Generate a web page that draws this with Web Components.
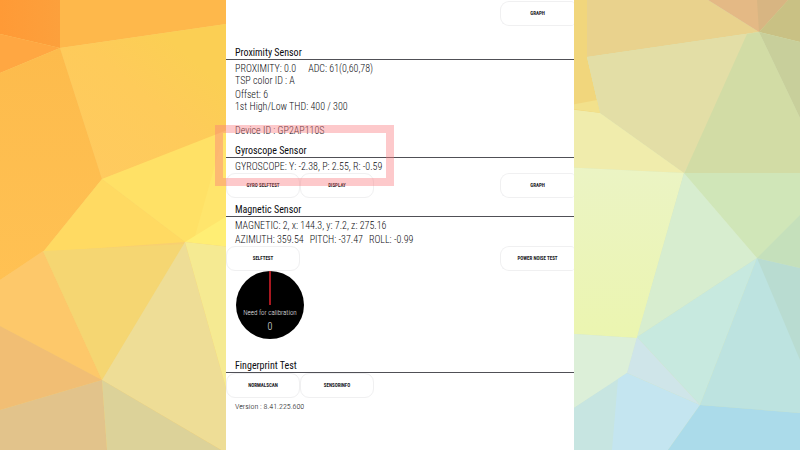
<!DOCTYPE html>
<html lang="en">
<head>
<meta charset="utf-8">
<meta name="viewport" content="width=device-width, initial-scale=1">
<title>Sensor test</title>
<style>
  body {
    margin: 0;
    background: #fcc95a;
    color: #0c0c10;
    font-family: "Roboto Condensed", Roboto, "Liberation Sans", sans-serif;
  }
</style>
</head>
<body>
<sensor-app></sensor-app>

<script>
'use strict';

/**
 * Attach an open shadow root with the given markup
 * @param {HTMLElement} host
 * @param {string} html
 * @return {ShadowRoot}
 */
const shadow = (host, html) => {
  const root = host.attachShadow({mode: 'open'});
  root.innerHTML = html;
  return root;
};

/**
 * Low poly wallpaper, stretched over the whole window
 */
class PolyBackdrop extends HTMLElement {
  constructor() {
    super();
    shadow(this, `
    <style>
      :host {
        display: block;
      }
      svg {
        display: block;
        width: 100%;
        height: 100%;
      }
    </style>
    <svg viewBox="0 0 800 450" preserveAspectRatio="none" aria-hidden="true">
      <defs>
        <linearGradient id="a" x1="0" y1="1" x2="1" y2="0">
          <stop offset="0" stop-color="#ffca60"/><stop offset=".5" stop-color="#fecb5a"/><stop offset=".75" stop-color="#fbcf54"/>
        </linearGradient>
        <linearGradient id="b" x1="0" y1="0" x2="1" y2="0">
          <stop offset="0" stop-color="#ff9a36"/><stop offset="1" stop-color="#fca03c"/>
        </linearGradient>
        <linearGradient id="c" x1="0" y1="0" x2="0" y2="1">
          <stop offset="0" stop-color="#fdbb4c"/><stop offset="1" stop-color="#ffc153"/>
        </linearGradient>
        <linearGradient id="d" x1="0" y1="0" x2="0" y2="1">
          <stop offset="0" stop-color="#ebf4c4"/><stop offset="1" stop-color="#ebf5b0"/>
        </linearGradient>
      </defs>
      <rect width="400" height="450" fill="#f8d070"/>
      <rect x="400" width="400" height="450" fill="#d8e6b8"/>
      <path fill="url(#b)" d="M0 0H60V48L0 34z"/>
      <path fill="#ffa742" d="M0 34L60 48L0 73z"/>
      <path fill="#feb84b" d="M60 0H240V22L60 48z"/>
      <path fill="url(#a)" d="M60 48L240 22V127L102 179z"/>
      <path fill="url(#c)" d="M0 73L60 48L102 179L43 252L0 280z"/>
      <path fill="#ffda62" d="M102 179L185 242L43 252z"/>
      <path fill="#ffe166" d="M102 179L240 125V230L185 242z"/>
      <path fill="#ffe56c" d="M222 140H240V215L195 236z"/>
      <path fill="#ffee74" d="M240 208V248L185 242z"/>
      <path fill="#fdc86a" d="M0 280L43 251L102 380L0 326z"/>
      <path fill="#f5d672" d="M43 251L185 244L102 380z"/>
      <path fill="#eedd96" d="M185 242L240 438V461L102 380z"/>
      <path fill="#f5ea92" d="M185 242L240 248V438z"/>
      <path fill="#f1be74" d="M0 326L102 380L0 410z"/>
      <path fill="#e2c38b" d="M0 410L102 380L107 450H0z"/>
      <path fill="#dcd299" d="M102 380L221 450H107z"/>

      <path fill="#f1d67c" d="M560 0H587V57L600 113L560 109z"/>
      <path fill="#e9d28d" d="M587 0H708L759 32L587 57z"/>
      <path fill="#e4b985" d="M708 0H788L759 32z"/>
      <path fill="#d8b582" d="M757 0H788L759 32z"/>
      <path fill="#c9c184" d="M788 0H800V42L759 32z"/>
      <path fill="#e3dea6" d="M587 57L759 32L684 173L600 113z"/>
      <path fill="#d2dca5" d="M747 34L759 32L800 118V174H684z"/>
      <path fill="#c8cf9b" d="M759 32L800 42V118z"/>
      <path fill="#f0ecac" d="M560 108L600 113L684 173L560 167z"/>
      <path fill="#f2e18c" d="M560 107L597 100L600 113z"/>
      <path fill="url(#d)" d="M560 167L684 173L637 338L560 333z"/>
      <path fill="#d0e6b8" d="M684 173H800V222L757 258z"/>
      <path fill="#c5e0bb" d="M800 215V268L757 258z"/>
      <path fill="#d7edcf" d="M684 173L757 258L637 337z"/>
      <path fill="#c7e9df" d="M757 258L700 405L637 337z"/>
      <path fill="#bde3e0" d="M757 258L800 330V413L700 405z"/>
      <path fill="#b9dcd1" d="M757 258L800 268V360z"/>
      <path fill="#dcefd8" d="M560 333L637 338L627 374L560 417z"/>
      <path fill="#cfe5e9" d="M637 337L700 405L627 373z"/>
      <path fill="#c7e5e1" d="M560 417L627 373V450H560z"/>
      <path fill="#c4e5f0" d="M618 379L627 373L700 405L668 450H612z"/>
      <path fill="#abdbea" d="M700 405L800 413V450H668z"/>
    </svg>`);
  }
}
customElements.define('poly-backdrop', PolyBackdrop);

/**
 * Heading with a rule under it, and the readings of one sensor
 */
class SensorSection extends HTMLElement {
  constructor() {
    super();
    shadow(this, `
    <style>
      :host {
        display: block;
        position: relative;
      }
      h2 {
        margin: 0;
        padding-left: 9px;
        border-bottom: 1px solid #505056;
        font-size: 10px;
        font-weight: 400;
        line-height: 13px;
      }
      ::slotted(sensor-reading:first-child) {
        margin-top: 3px;
      }
    </style>
    <h2></h2>
    <slot></slot>`);
  }
  connectedCallback() {
    this.shadowRoot.querySelector('h2').textContent = this.getAttribute('heading');
  }
}
customElements.define('sensor-section', SensorSection);

/**
 * One line of values, each value in its own span
 */
class SensorReading extends HTMLElement {
  constructor() {
    super();
    shadow(this, `
    <style>
      :host {
        display: flex;
        gap: 6px;
        padding-left: 9px;
        font-size: 10px;
        font-weight: 300;
        line-height: 12px;
        white-space: pre;
      }
      :host([wide]) {
        gap: 12px;
      }
      :host([small]) {
        margin-top: 3px;
        font-size: 8px;
      }
    </style>
    <slot></slot>`);
  }
}
customElements.define('sensor-reading', SensorReading);

/**
 * Row of buttons in four columns; the end attribute puts one in the last
 */
class ButtonRow extends HTMLElement {
  constructor() {
    super();
    shadow(this, `
    <style>
      :host {
        display: grid;
        grid-template-columns: 74fr 74fr 126fr 74fr;
      }
      ::slotted([end]) {
        grid-column: 4;
      }
    </style>
    <slot></slot>`);
  }
}
customElements.define('button-row', ButtonRow);

class TestButton extends HTMLElement {
  constructor() {
    super();
    shadow(this, `
    <style>
      :host {
        display: block;
      }
      button {
        display: block;
        width: 100%;
        height: 25px;
        padding: 0 0 2px;
        border: 1px solid #f0f0f1;
        border-radius: 9px;
        background: #fff;
        color: #202024;
        font: bold 5px/12px "Roboto Condensed", Roboto, sans-serif;
        cursor: pointer;
      }
      :host([end]) button {
        border-right: 0;
        border-radius: 9px 3px 3px 9px;
      }
    </style>
    <button type="button"><slot></slot></button>`);
  }
}
customElements.define('test-button', TestButton);

/**
 * Compass of the magnetic sensor
 */
class CompassDial extends HTMLElement {
  constructor() {
    super();
    shadow(this, `
    <style>
      :host {
        display: flex;
        flex-direction: column;
        align-items: center;
        width: 68px;
        height: 68px;
        margin-left: 10px;
        border-radius: 50%;
        background: #000;
        color: #e6e6ea;
        font-size: 7px;
        font-weight: 300;
        line-height: 16px;
        white-space: nowrap;
      }
      i {
        width: 2px;
        height: 34px;
        background: #a81820;
      }
      output {
        font-size: 10px;
        line-height: 12px;
      }
    </style>
    <i></i>
    <slot></slot>
    <output></output>`);
  }
  connectedCallback() {
    this.shadowRoot.querySelector('output').textContent = this.getAttribute('value');
  }
}
customElements.define('compass-dial', CompassDial);

/**
 * Translucent frame over the section that it points out
 */
class FocusFrame extends HTMLElement {
  constructor() {
    super();
    shadow(this, `
    <style>
      :host {
        display: block;
        position: absolute;
        top: -19px;
        left: -11px;
        box-sizing: border-box;
        width: 179px;
        height: 61px;
        border: 8px solid rgba(250, 120, 125, .4);
        pointer-events: none;
      }
    </style>`);
  }
}
customElements.define('focus-frame', FocusFrame);

class SensorApp extends HTMLElement {
  constructor() {
    super();
    shadow(this, `
    <style>
      :host {
        display: grid;
        min-height: 100vh;
      }
      poly-backdrop, main {
        grid-area: 1 / 1;
      }
      poly-backdrop {
        contain: size;
      }
      main {
        display: flex;
        flex-direction: column;
        position: relative;
        box-sizing: border-box;
        width: 43.5%;
        margin: 0 auto;
        padding-top: 1px;
        background: #fff;
      }
      .first {
        margin-bottom: 20px;
      }
      .spaced {
        margin-top: 2px;
      }
      .apart {
        margin-top: 12px;
      }
      .gyroscope {
        margin-top: 7px;
      }
      .magnetic {
        margin-top: 5px;
      }
      .fingerprint {
        margin-top: 20px;
      }
    </style>
    <poly-backdrop></poly-backdrop>
    <main>
      <button-row class="first">
        <test-button end>GRAPH</test-button>
      </button-row>
      <sensor-section heading="Proximity Sensor">
        <sensor-reading wide><span>PROXIMITY: 0.0</span><span>ADC: 61(0,60,78)</span></sensor-reading>
        <sensor-reading>TSP color ID : A</sensor-reading>
        <sensor-reading class="spaced">Offset: 6</sensor-reading>
        <sensor-reading>1st High/Low THD: 400 / 300</sensor-reading>
        <sensor-reading class="apart">Device ID : GP2AP110S</sensor-reading>
      </sensor-section>
      <sensor-section class="gyroscope" heading="Gyroscope Sensor">
        <sensor-reading>GYROSCOPE: Y: -2.38, P: 2.55, R: -0.59</sensor-reading>
        <button-row>
          <test-button>GYRO SELFTEST</test-button>
          <test-button>DISPLAY</test-button>
          <test-button end>GRAPH</test-button>
        </button-row>
        <focus-frame></focus-frame>
      </sensor-section>
      <sensor-section class="magnetic" heading="Magnetic Sensor">
        <sensor-reading>MAGNETIC: 2, x: 144.3, y: 7.2, z: 275.16</sensor-reading>
        <sensor-reading class="spaced"><span>AZIMUTH: 359.54</span><span>PITCH: -37.47</span><span>ROLL: -0.99</span></sensor-reading>
        <button-row>
          <test-button>SELFTEST</test-button>
          <test-button end>POWER NOISE TEST</test-button>
        </button-row>
        <compass-dial value="0">Need for calibration</compass-dial>
      </sensor-section>
      <sensor-section class="fingerprint" heading="Fingerprint Test">
        <button-row>
          <test-button>NORMALSCAN</test-button>
          <test-button>SENSORINFO</test-button>
        </button-row>
        <sensor-reading small>Version : 8.41.225.600</sensor-reading>
      </sensor-section>
    </main>`);
  }
}
customElements.define('sensor-app', SensorApp);
</script>
</body>
</html>
